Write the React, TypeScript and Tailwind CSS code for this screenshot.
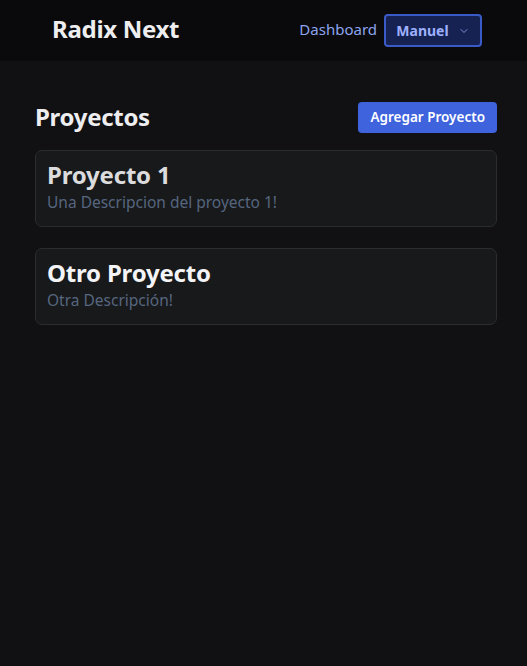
import { ChevronDown } from 'lucide-react';

const projects = [
  { title: 'Proyecto 1', description: 'Una Descripcion del proyecto 1!', titleColor: 'text-[#dcdcde]' },
  { title: 'Otro Proyecto', description: 'Otra Descripción!', titleColor: 'text-[#f4f4f6]' },
];

export default function App() {
  return (
    <div className="min-h-screen bg-[#111113] font-['Noto_Sans',sans-serif]">
      <nav className="h-[61px] bg-[#0a0a0c] flex items-center justify-between pl-[52px] pr-[45px]">
        <span className="text-[24px] font-bold text-[#eeeef0] tracking-[-0.3px] pb-[3px]">Radix Next</span>
        <div className="flex items-center gap-[7px]">
          <a className="text-[15px] text-[#8da4ef] pb-[3px]">Dashboard</a>
          <button className="h-[33px] w-[98px] flex items-center justify-center gap-[9px] rounded-[4px] border-2 border-[#3a5bc7] bg-[#162252] text-[#9eb1ff] text-[14px] font-bold">
            Manuel
            <ChevronDown className="w-3 h-3" strokeWidth={1.5} />
          </button>
        </div>
      </nav>

      <main className="pl-[35px] pr-[30px] pt-[38px] flex flex-col">
        <div className="flex items-center justify-between mb-[15px]">
          <h1 className="text-[24px] font-bold text-[#eeeef0] tracking-[-0.3px]">Proyectos</h1>
          <button className="h-[31px] px-[12px] rounded-[4px] bg-[#3e63dd] text-white text-[13.5px] font-semibold">
            Agregar Proyecto
          </button>
        </div>

        <div className="flex flex-col gap-[21px]">
          {projects.map((p) => (
            <div
              key={p.title}
              className="h-[77px] rounded-[7px] border border-[#2b2c30] bg-[#18191b] px-[11px] pt-[8px]"
            >
              <h2 className={`text-[24px] font-bold leading-[32px] tracking-[-0.2px] ${p.titleColor}`}>{p.title}</h2>
              <p className="text-[15.5px] leading-[22px] text-[#56667f]">{p.description}</p>
            </div>
          ))}
        </div>
      </main>
    </div>
  );
}
